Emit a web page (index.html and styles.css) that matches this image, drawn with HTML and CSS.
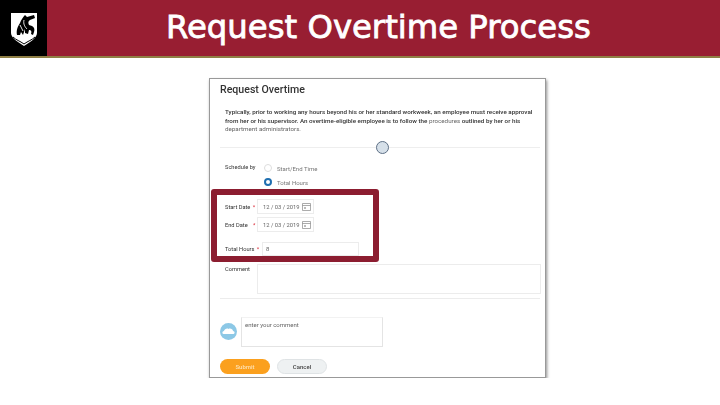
FILE: index.html
```html
<!DOCTYPE html>
<html lang="en">
<head>
  <meta charset="UTF-8" />
  <title>Request Overtime Process</title>
  <meta name="viewport" content="width=device-width, initial-scale=1.0" />
  <link rel="stylesheet" href="styles.css">
</head>
<body>
  <header class="banner">
    <div class="logo-box">
      <svg class="logo" width="28" height="34" viewBox="0 0 28 34">
        <path fill="#fff" d="M1 1H27V21C27 26 20 30 14 34C8 30 1 26 1 21Z"/>
        <path fill="none" stroke="#000" stroke-width="1" d="M3 25C6 28 10 29 14 32C18 29 22 28 25 25"/>
        <path fill="#000" d="M7 23C6 18 8 14 10 11C11 8 13 5 15 3L17 5L24 3L25 6L20 8C18 9 18 11 19 13L22 14C24 15 25 17 24 20L23 23L21 22C22 19 21 18 19 18L18 22L15 21L15 17L13 23L11 20L10 23Z"/>
        <path fill="none" stroke="#fff" stroke-width=".9" d="M10 13L13 19M14 8C13 12 15 15 17 17"/>
      </svg>
    </div>
    <h1 class="banner-title">Request Overtime Process</h1>
  </header>

  <main class="stage">
    <div class="shot">
      <h2 class="shot-title">Request Overtime</h2>
      <p class="intro">
        <span class="intro-line"><b>Typically, prior to working any hours beyond his or her standard workweek, an employee must receive approval</b></span>
        <span class="intro-line"><b>from her or his supervisor. An overtime-eligible employee is to follow the</b> procedures <b>outlined by her or his</b></span>
        <span class="intro-line">department administrators.</span>
      </p>

      <div class="divider">
        <span class="divider-knob"></span>
      </div>

      <div class="row row-schedule">
        <span class="label">Schedule by</span>
        <div class="radios">
          <div class="radio-item"><span class="radio"></span>Start/End Time</div>
          <div class="radio-item"><span class="radio radio-on"></span>Total Hours</div>
        </div>
      </div>

      <div class="row row-start">
        <span class="label">Start Date <i class="req">*</i></span>
        <div class="field field-date">12 / 03 / 2019
          <svg class="cal" width="9" height="9" viewBox="0 0 9 9"><path fill="none" stroke="#888" stroke-width=".7" d="M.5 1.5H8.5V8.5H.5ZM.5 3.5H8.5"/><path fill="#bbb" d="M2 5H4V7H2Z"/></svg>
        </div>
      </div>
      <div class="row row-end">
        <span class="label">End Date <i class="req req-end">*</i></span>
        <div class="field field-date">12 / 03 / 2019
          <svg class="cal" width="9" height="9" viewBox="0 0 9 9"><path fill="none" stroke="#888" stroke-width=".7" d="M.5 1.5H8.5V8.5H.5ZM.5 3.5H8.5"/><path fill="#bbb" d="M2 5H4V7H2Z"/></svg>
        </div>
      </div>
      <div class="row row-hours">
        <span class="label">Total Hours <i class="req">*</i></span>
        <div class="field field-hours">8</div>
      </div>
      <div class="row row-comment">
        <span class="label">Comment</span>
        <div class="field field-comment"></div>
      </div>

      <div class="rule"></div>

      <div class="reply">
        <svg class="avatar" width="17" height="17" viewBox="0 0 17 17">
          <circle cx="8.5" cy="8.5" r="8.5" fill="#8cc8e6"/>
          <path fill="#fff" d="M3.5 11C2 11 2 8 4 8C4.500 6 7 5 8.500 6C10 5 13 6 13 8C15 8 15 11 13.500 11Z"/>
        </svg>
        <div class="reply-box">enter your comment</div>
      </div>

      <div class="actions">
        <span class="btn btn-submit">Submit</span>
        <span class="btn btn-cancel">Cancel</span>
      </div>

      <div class="highlight"></div>
    </div>
  </main>
</body>
</html>
```

FILE: styles.css
```css
body {
  margin: 0;
  background: #fff;
  font-family: "Roboto", "Liberation Sans", sans-serif;
  overflow: hidden;
}

.banner {
  display: flex;
  height: 56px;
  background: #981e32;
  border-bottom: 2px solid #8f7f45;
}

.logo-box {
  display: flex;
  flex: 0 0 47px;
  align-items: flex-start;
  justify-content: center;
  padding-top: 12px;
  box-sizing: border-box;
  background: #000;
}

.banner-title {
  margin: 0 0 0 119px;
  font-family: "DejaVu Sans", sans-serif;
  font-size: 32.3px;
  font-weight: 400;
  line-height: 54px;
  color: #fff;
  -webkit-text-stroke: 0.8px #fff;
  white-space: nowrap;
}

.stage {
  padding: 20px 0 0 209px;
}

.shot {
  position: relative;
  width: 335px;
  height: 298px;
  border: 1px solid #999;
  box-shadow: 1px 2px 3px rgba(0, 0, 0, 0.45);
  color: #444;
  font-size: 6px;
}

.shot > *:not(.highlight) {
  filter: blur(0.35px);
}

.shot-title {
  margin: 0;
  padding: 4px 0 0 10px;
  font-size: 10.6px;
  font-weight: 500;
  line-height: 13px;
  color: #333;
}

.intro {
  margin: 12px 0 0 15px;
  font-size: 6.25px;
  line-height: 8.7px;
  color: #666;
}

.intro-line {
  display: block;
  white-space: nowrap;
}

.intro b {
  font-weight: 500;
  color: #333;
}

.divider {
  display: flex;
  justify-content: center;
  height: 13px;
  margin: 7px 5px 0 10px;
  background: linear-gradient(#eee, #eee) center / 100% 1px no-repeat;
}

.divider-knob {
  box-sizing: border-box;
  width: 13px;
  height: 13px;
  margin-left: 4px;
  border: 1px solid #5d6f85;
  border-radius: 50%;
  background: #d6e0e9;
}

.row {
  display: flex;
  align-items: center;
  margin-left: 15px;
}

.label {
  flex: 0 0 32px;
  min-width: 0;
  font-size: 5.7px;
  white-space: nowrap;
  color: #333;
}

.req {
  margin-left: 1px;
  font-style: normal;
  color: #d8212f;
}

.req-end {
  margin-left: 4px;
}

.row-schedule {
  align-items: flex-start;
  margin-top: 7px;
}

.row-schedule .label {
  padding-top: 3px;
}

.radios {
  margin-left: 7px;
}

.radio-item {
  display: flex;
  align-items: center;
  gap: 5px;
  height: 14px;
  color: #777;
}

.radio {
  box-sizing: border-box;
  width: 8px;
  height: 8px;
  border: 1px solid #ddd;
  border-radius: 50%;
}

.radio-on {
  border: 2.500px solid #1f6fb0;
  background: #fff;
}

.field {
  box-sizing: border-box;
  border: 1px solid #ececec;
  color: #666;
}

.field-date {
  display: flex;
  align-items: center;
  justify-content: space-between;
  width: 57px;
  height: 15px;
  padding: 0 2px 0 5px;
  font-size: 5.8px;
  white-space: nowrap;
}

.row-start {
  margin-top: 10px;
}

.row-end {
  margin-top: 3px;
}

.row-hours {
  margin-top: 10px;
}

.field-hours {
  width: 97px;
  height: 14px;
  margin-left: 5px;
  padding-left: 3px;
  line-height: 12px;
}

.row-comment {
  align-items: flex-start;
  margin-top: 8px;
}

.row-comment .label {
  padding-top: 2px;
}

.field-comment {
  width: 284px;
  height: 30px;
}

.rule {
  height: 1px;
  margin: 4px 5px 0 10px;
  background: #ececec;
}

.reply {
  display: flex;
  align-items: flex-end;
  gap: 4px;
  margin: 18px 0 0 10px;
}

.avatar {
  margin-bottom: 7px;
}

.reply-box {
  box-sizing: border-box;
  width: 142px;
  height: 30px;
  padding: 3px 3px;
  border: 1px solid #e4e4e4;
  border-top-color: #f2f2f2;
  color: #666;
}

.actions {
  display: flex;
  gap: 7px;
  margin: 12px 0 0 10px;
}

.btn {
  box-sizing: border-box;
  width: 50px;
  height: 15px;
  border-radius: 8px;
  text-align: center;
  line-height: 15px;
  font-weight: 500;
}

.btn-submit {
  background: #fba01e;
  color: #fde0b0;
}

.btn-cancel {
  border: 1px solid #dfe3e5;
  background: #eef1f2;
  line-height: 13px;
  color: #444;
}

.highlight {
  position: absolute;
  left: 1px;
  top: 110px;
  box-sizing: border-box;
  width: 168px;
  height: 73px;
  border: 6px solid #8c1d30;
  border-radius: 3px;
}
```
